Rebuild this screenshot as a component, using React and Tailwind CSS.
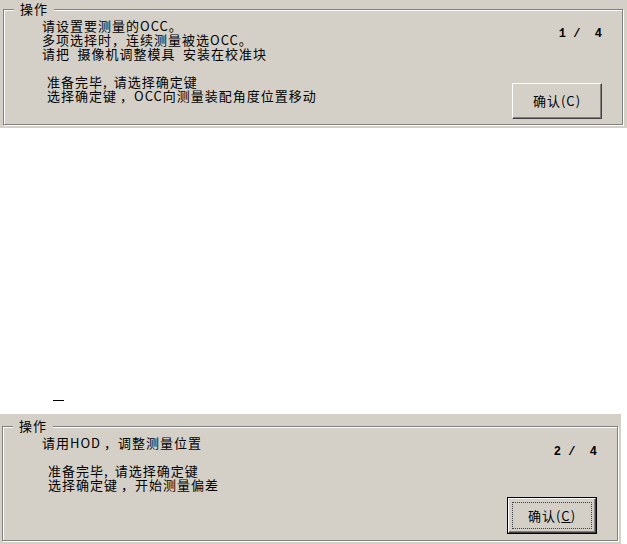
import React from "react";

const cjk = { fontFamily: '"Noto Sans CJK SC", "Noto Sans", sans-serif' };
const mono = { fontFamily: '"Liberation Mono", monospace' };

// Windows classic etched group box
const GroupBox = ({ children }) => (
    <div className="relative h-full border border-[#808080] shadow-[1px_1px_0_#ffffff,inset_1px_1px_0_#ffffff]">
        <span className="absolute left-[10px] top-[-9px] bg-[#d4d0c8] px-[6px] text-[13px] leading-[16px] tracking-[1px] text-black">
            操作
        </span>
        {children}
    </div>
);

const RaisedButton = ({ children }) => (
    <button
        type="button"
        className="flex h-[36px] w-[90px] items-center justify-center border border-t-white border-l-white border-r-[#404040] border-b-[#404040] bg-[#d4d0c8] text-[13px] tracking-[1px] text-black shadow-[inset_-1px_-1px_0_#808080]"
    >
        {children}
    </button>
);

const FocusedButton = ({ children }) => (
    <button type="button" className="h-[37px] w-[90px] border border-black bg-[#d4d0c8] p-0">
        <div className="flex h-full w-full p-[3px] border border-t-white border-l-white border-r-[#404040] border-b-[#404040] shadow-[inset_-1px_-1px_0_#808080]">
            <div className="flex flex-1 items-center justify-center border border-dotted border-[#404040] text-[13px] tracking-[1px] text-black">
                {children}
            </div>
        </div>
    </button>
);

export default function App() {
    return (
        <div className="w-[627px] h-[544px] bg-white" style={cjk}>
            {/* Step 1 panel */}
            <div className="h-[128px] w-[627px] bg-[#d4d0c8] pt-[9px] pl-[3px] pr-[4px] pb-[3px]">
                <GroupBox>
                    <div className="flex justify-between pr-[20px]">
                        <div className="pt-[9px] text-[13px] leading-[14px] tracking-[1px] text-black">
                            <div className="pl-[38px]">请设置要测量的OCC。</div>
                            <div className="pl-[38px]">多项选择时，连续测量被选OCC。</div>
                            <div className="pl-[38px]">请把{"\u2002"}摄像机调整模具{"\u2002"}安装在校准块</div>
                            <div className="h-[14px]" />
                            <div className="pl-[43px]">准备完毕,<span className="pl-[6px]">请选择确定键</span></div>
                            <div className="pl-[43px]">选择确定键<span className="pl-[3px]">，</span>OCC向测量装配角度位置移动</div>
                        </div>
                        <div className="flex flex-col items-end pt-[17px]">
                            <div className="whitespace-pre text-[12px] leading-[14px] font-bold text-black" style={mono}>
                                1 /  4
                            </div>
                            <div className="mt-[42px]">
                                <RaisedButton>确认(C)</RaisedButton>
                            </div>
                        </div>
                    </div>
                </GroupBox>
            </div>

            {/* gap with stray cursor mark */}
            <div className="h-[286px] pt-[272px] pl-[53px]">
                <div className="h-px w-[11px] bg-black" />
            </div>

            {/* Step 2 panel */}
            <div className="h-[130px] w-[621px] bg-[#d4d0c8] pt-[12px] pl-[2px] pr-[3px] pb-[3px]">
                <GroupBox>
                    <div className="flex justify-between pr-[20px]">
                        <div className="pt-[9px] text-[13px] leading-[14px] tracking-[1px] text-black">
                            <div className="pl-[39px]">请用HOD<span className="pl-[3px]">，</span>调整测量位置</div>
                            <div className="h-[14px]" />
                            <div className="pl-[45px]">准备完毕,<span className="pl-[6px]">请选择确定键</span></div>
                            <div className="pl-[45px]">选择确定键<span className="pl-[3px]">，</span>开始测量偏差</div>
                        </div>
                        <div className="flex flex-col items-end pt-[18px]">
                            <div className="whitespace-pre text-[12px] leading-[14px] font-bold text-black" style={mono}>
                                2 /  4
                            </div>
                            <div className="mt-[38px]">
                                <FocusedButton>
                                    确认(<span className="underline">C</span>)
                                </FocusedButton>
                            </div>
                        </div>
                    </div>
                </GroupBox>
            </div>
        </div>
    );
}
